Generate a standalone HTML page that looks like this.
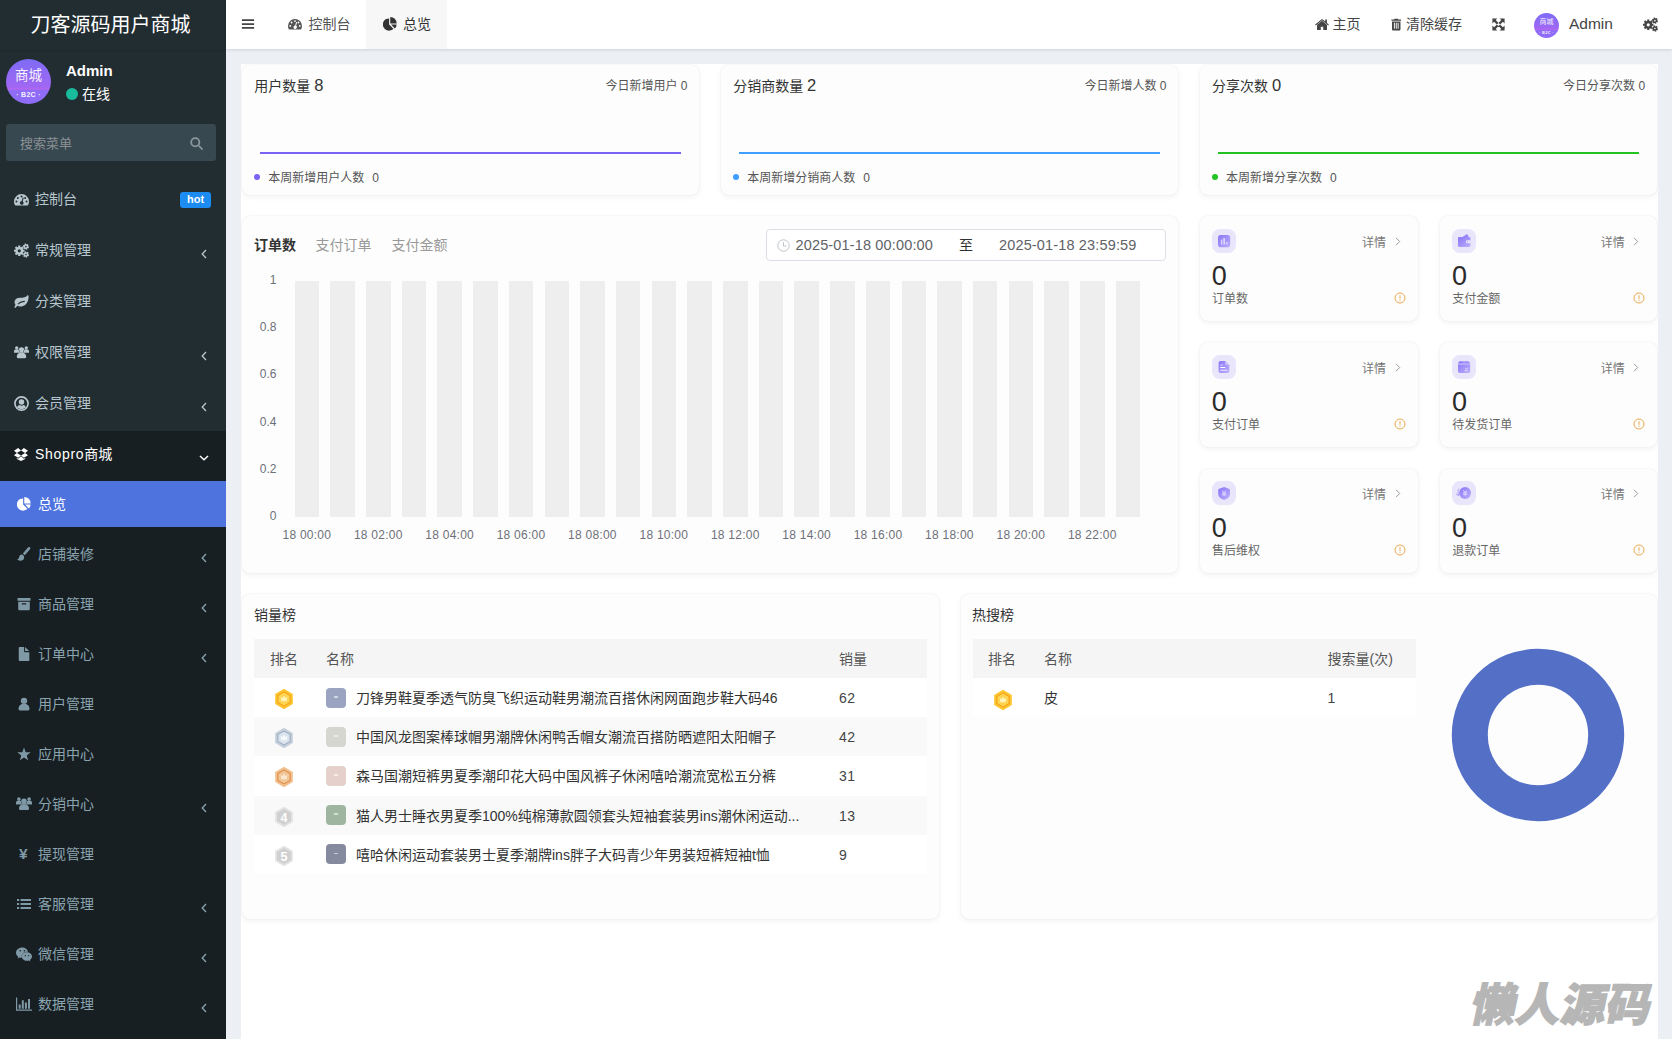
<!DOCTYPE html>
<html lang="zh-CN"><head><meta charset="utf-8"><title>刀客源码用户商城</title>
<style>
*{box-sizing:border-box;margin:0;padding:0}
html,body{width:1672px;height:1039px;overflow:hidden}
body{background:#eceff4;font-family:"Liberation Sans","Noto Sans CJK SC",sans-serif;font-size:14px;color:#333;position:relative}
.abs{position:absolute}
.ic{display:block;position:absolute}
.t{position:absolute;white-space:nowrap;line-height:20px;height:20px}
#side{position:absolute;left:0;top:0;width:226px;height:1039px;background:#222d32}
#logo{position:absolute;left:-2.500px;top:0;width:226px;height:50px;color:#fff;font-size:20px;line-height:51.500px;text-align:center;box-shadow:0 1px 2px rgba(0,0,0,.12)}
#sub{position:absolute;left:0;top:431px;width:226px;height:608px;background:#181f23}
#act{position:absolute;left:0;top:481px;width:226px;height:46px;background:#4e73df}
.m1{color:#b8c7ce}.m2{color:#8aa4af}.w{color:#fff}
#nav{position:absolute;left:226px;top:0;width:1446px;height:49px;background:#fff;box-shadow:0 1px 3px rgba(0,21,41,.12);color:#444}
#panel{position:absolute;left:241px;top:63.600px;width:1417px;height:976px;background:#fff;overflow:hidden}
.card{position:absolute;background:#fdfdfd;border-radius:8px;box-shadow:0 2px 6px rgba(0,0,0,.055),0 0 1.500px rgba(0,0,0,.09)}
.g12{font-size:12px;color:#555}
.dot{position:absolute;width:6px;height:6px;border-radius:50%}
.ax{font-size:12px;color:#6e7079}
.th{position:absolute;background:#f5f5f5;height:39px}
.tr{position:absolute;height:39.3px}
.tr.s{background:#f9f9f9}
.thumb{position:absolute;width:20px;height:20px;border-radius:4px}
.thumb:after{content:"";position:absolute;left:8px;top:8.500px;width:4px;height:1.5px;background:rgba(255,255,255,.55)}
</style></head>
<body>
<svg width="0" height="0" style="position:absolute"><defs><linearGradient id="pg" x1="0" y1="0" x2="1" y2="1"><stop offset="0" stop-color="#8a75f7"/><stop offset="1" stop-color="#bcaffc"/></linearGradient></defs></svg>
<div id="side">
<div id="sub"></div><div id="act"></div>
<div id="logo">刀客源码用户商城</div>
<div class="abs" style="left:6px;top:59px;width:45px;height:45px;border-radius:50%;overflow:hidden;background:linear-gradient(180deg,#7d6cf5 0%,#a067f3 62%,#b665f0 66%,#8f6cf7 70%,#8f6cf7 100%);color:#fff;text-align:center"><div style="position:absolute;left:0;right:0;top:8.6px;font-size:13.5px;line-height:15.5px;opacity:.92">商城</div><div style="position:absolute;left:0;right:0;top:31.5px;font-size:7px;line-height:8px;font-weight:bold;opacity:.9;letter-spacing:.3px">· B2C ·</div></div>
<div class="t w" style="left:66px;top:60.5px;height:20px;line-height:20px;font-weight:bold;font-size:15px">Admin</div>
<div class="abs" style="left:66px;top:88px;width:12px;height:12px;border-radius:50%;background:#18bc9c"></div>
<div class="t w" style="left:82px;top:84.0px;height:20px;line-height:20px;font-size:14px">在线</div>
<div class="abs" style="left:6px;top:124px;width:210px;height:37px;border-radius:3px;background:#374850"></div>
<div class="t " style="left:20px;top:133.6px;height:20px;line-height:20px;color:#8a9094;font-size:13px">搜索菜单</div>
<svg class="ic" width="13" height="13" viewBox="0 0 16 16" fill="#8b979d" fill-rule="evenodd" style="left:190px;top:136.5px"><path d="M0.30 6.50a6.2 6.2 0 1 0 12.4 0a6.2 6.2 0 1 0 -12.4 0zM2.60 6.50a3.9 3.9 0 1 0 7.8 0a3.9 3.9 0 1 0 -7.8 0zM10.300 11.700l1.400-1.400 3.900 3.900c.4 .4 .4 1 0 1.400s-1 .4-1.400 0z"/></svg>
<svg class="ic" width="15" height="15" viewBox="0 0 16 16" fill="#b8c7ce" fill-rule="evenodd" style="left:14px;top:191.5px"><path d="M8 2.2a8 8 0 0 0-8 8c0 1.3 .3 2.6 .9 3.7 .2 .3 .5 .5 .8 .5h12.6c.3 0 .6-.2 .8-.5 .6-1.1 .9-2.4 .9-3.7a8 8 0 0 0-8-8zM1.55 10.20a1.05 1.05 0 1 0 2.1 0a1.05 1.05 0 1 0 -2.1 0zM3.05 6.30a1.05 1.05 0 1 0 2.1 0a1.05 1.05 0 1 0 -2.1 0zM6.95 4.70a1.05 1.05 0 1 0 2.1 0a1.05 1.05 0 1 0 -2.1 0zM10.85 6.30a1.05 1.05 0 1 0 2.1 0a1.05 1.05 0 1 0 -2.1 0zM12.35 10.20a1.05 1.05 0 1 0 2.1 0a1.05 1.05 0 1 0 -2.1 0zM9.3 5.8l-1.1 3.9a2 2 0 1 0 1.1 .3l1.1-3.9z"/></svg>
<div class="t m1" style="left:35px;top:189.0px;height:20px;line-height:20px;">控制台</div>
<svg class="ic" width="15" height="15" viewBox="0 0 16 16" fill="#b8c7ce" fill-rule="evenodd" style="left:14px;top:242.5px"><path d="M11.18 7.14L11.18 9.46L9.75 9.43L9.34 10.43L10.36 11.43L8.73 13.06L7.73 12.04L6.73 12.45L6.76 13.88L4.44 13.88L4.47 12.45L3.47 12.04L2.47 13.06L0.84 11.43L1.86 10.43L1.45 9.43L0.02 9.46L0.02 7.14L1.45 7.17L1.86 6.17L0.84 5.17L2.47 3.54L3.47 4.56L4.47 4.15L4.44 2.72L6.76 2.72L6.73 4.15L7.73 4.56L8.73 3.54L10.36 5.17L9.34 6.17L9.75 7.17zM3.90 8.30a1.7 1.7 0 1 0 3.4 0a1.7 1.7 0 1 0 -3.4 0zM16.10 3.99L15.56 5.74L14.68 5.42L14.07 5.99L14.32 6.89L12.53 7.30L12.37 6.38L11.57 6.13L10.92 6.80L9.68 5.45L10.39 4.85L10.20 4.04L9.30 3.81L9.84 2.06L10.72 2.38L11.33 1.81L11.08 0.91L12.87 0.50L13.03 1.42L13.83 1.67L14.48 1.00L15.72 2.35L15.01 2.95L15.20 3.76zM11.85 3.90a0.85 0.85 0 1 0 1.7 0a0.85 0.85 0 1 0 -1.7 0zM16.10 12.39L15.56 14.14L14.68 13.82L14.07 14.39L14.32 15.29L12.53 15.70L12.37 14.78L11.57 14.53L10.92 15.20L9.68 13.85L10.39 13.25L10.20 12.44L9.30 12.21L9.84 10.46L10.72 10.78L11.33 10.21L11.08 9.31L12.87 8.90L13.03 9.82L13.83 10.07L14.48 9.40L15.72 10.75L15.01 11.35L15.20 12.16zM11.85 12.30a0.85 0.85 0 1 0 1.7 0a0.85 0.85 0 1 0 -1.7 0z"/></svg>
<div class="t m1" style="left:35px;top:240.0px;height:20px;line-height:20px;">常规管理</div>
<svg class="ic" style="left:201px;top:248.8px" width="6" height="10" viewBox="0 0 6 10"><path d="M5 1L1.200 5 5 9" fill="none" stroke="#b8c7ce" stroke-width="1.300"/></svg>
<svg class="ic" width="15" height="15" viewBox="0 0 16 16" fill="#b8c7ce" fill-rule="evenodd" style="left:14px;top:293.5px"><path d="M15.6 2.6c0 6-3.6 10.800-9.1 10.800-1.100 0-2.200-.3-3.100-.8-.5 .7-.9 1.500-1.500 2-.5 .4-1.300 .1-1.400-.5-.1-.6 .6-1.400 1.200-2.300C1 11 .6 10 .6 8.900c0-3.400 2.800-4.900 6.300-4.900 3 0 5.600-.4 7.200-2.400 .5-.6 1.500-.2 1.500 .9zM11.500 7.300c-3 .1-5.600 .9-7.600 3.200l.7 .7c1.900-2 4.200-2.700 6.900-2.800z"/></svg>
<div class="t m1" style="left:35px;top:291.0px;height:20px;line-height:20px;">分类管理</div>
<svg class="ic" width="15" height="15" viewBox="0 0 16 16" fill="#b8c7ce" fill-rule="nonzero" style="left:14px;top:344.5px"><path d="M5.10 5.30a2.9 2.9 0 1 0 5.8 0a2.9 2.9 0 1 0 -5.8 0zM3.00 12.80V12.11a5.00 4.20 0 0 1 10.00 0V12.80a1.20 1.20 0 0 1 -1.20 1.20H4.20a1.20 1.20 0 0 1 -1.20 -1.20zM1.10 3.00a1.798 1.798 0 1 0 3.596 0a1.798 1.798 0 1 0 -3.596 0zM-0.20 7.65V7.22a3.10 2.60 0 0 1 6.20 0V7.65a0.74 0.74 0 0 1 -0.74 0.74H0.54a0.74 0.74 0 0 1 -0.74 -0.74zM11.30 3.00a1.798 1.798 0 1 0 3.596 0a1.798 1.798 0 1 0 -3.596 0zM10.00 7.65V7.22a3.10 2.60 0 0 1 6.20 0V7.65a0.74 0.74 0 0 1 -0.74 0.74H10.74a0.74 0.74 0 0 1 -0.74 -0.74z"/></svg>
<div class="t m1" style="left:35px;top:342.0px;height:20px;line-height:20px;">权限管理</div>
<svg class="ic" style="left:201px;top:350.8px" width="6" height="10" viewBox="0 0 6 10"><path d="M5 1L1.200 5 5 9" fill="none" stroke="#b8c7ce" stroke-width="1.300"/></svg>
<svg class="ic" width="15" height="15" viewBox="0 0 16 16" fill="#b8c7ce" fill-rule="evenodd" style="left:14px;top:395.5px"><path d="M0.10 8.00a7.9 7.9 0 1 0 15.8 0a7.9 7.9 0 1 0 -15.8 0zM1.90 8.00a6.1 6.1 0 1 0 12.2 0a6.1 6.1 0 1 0 -12.2 0zM5.10 6.30a2.9 2.9 0 1 0 5.8 0a2.9 2.9 0 1 0 -5.8 0zM3.2 12.300c.5-1.700 1.600-2.600 2.700-2.800 .6 .5 1.300 .8 2.100 .8s1.500-.3 2.100-.8c1.100 .2 2.200 1.100 2.700 2.800-1.200 1.300-2.900 2.100-4.800 2.100s-3.600-.8-4.800-2.100z"/></svg>
<div class="t m1" style="left:35px;top:393.0px;height:20px;line-height:20px;">会员管理</div>
<svg class="ic" style="left:201px;top:401.8px" width="6" height="10" viewBox="0 0 6 10"><path d="M5 1L1.200 5 5 9" fill="none" stroke="#b8c7ce" stroke-width="1.300"/></svg>
<div class="abs" style="left:180px;top:192px;width:31px;height:16px;border-radius:3px;background:#1c8bf2;color:#fff;font-size:11px;font-weight:bold;line-height:15px;text-align:center">hot</div>
<svg class="ic" width="14" height="14" viewBox="0 0 16 16" fill="#fff" fill-rule="evenodd" style="left:14px;top:446.7px"><path d="M4.7 1.200L0 4.200l3.300 2.600L8 3.900zM11.300 1.200L16 4.200l-3.300 2.600L8 3.900zM0 9.400l4.700 3 3.300-2.700-4.700-2.900zM16 9.400l-4.700 3L8 9.700l4.700-2.900zM8 10.700l-3.300 2.700-1.500-.9v1.100L8 16l4.800-2.400v-1.100l-1.500 .9z"/></svg>
<div class="t w" style="left:35px;top:444.0px;height:20px;line-height:20px;"><span style="letter-spacing:.7px">Shopro</span>商城</div>
<svg class="ic" style="left:199px;top:454.5px" width="10" height="6" viewBox="0 0 10 6"><path d="M1 1L5 4.800 9 1" fill="none" stroke="#fff" stroke-width="1.5"/></svg>
<svg class="ic" width="14" height="14" viewBox="0 0 16 16" fill="#fff" fill-rule="evenodd" style="left:17px;top:496.8px"><path d="M7 1.600v6.900l4.900 4.900A7 7 0 1 1 7 1.600zM8.300 0a7.300 7.300 0 0 1 7.300 7.300H8.300zM9.200 8.600h6.400a7 7 0 0 1-2 4.500z"/></svg>
<div class="t w" style="left:38px;top:493.6px;height:20px;line-height:20px;">总览</div>
<svg class="ic" width="14" height="14" viewBox="0 0 16 16" fill="#7f9aa6" fill-rule="evenodd" style="left:16.5px;top:546.7px"><path d="M14.700 .3c-.6-.5-1.500-.4-2.200 .3L6.700 7.400l2.200 2 5.900-6.800c.7-.8 .6-1.700-.1-2.300zM5.700 8.500c-1.500 0-2.800 1-3.100 2.500-.3 1.500-1 2.500-2.400 3 .9 1.200 2.500 1.800 4.300 1.600 2.500-.3 4-2.200 3.600-4.400-.3-1.500-1.100-2.600-2.400-2.700z"/></svg>
<div class="t m2" style="left:38px;top:544.0px;height:20px;line-height:20px;">店铺装修</div>
<svg class="ic" style="left:201px;top:552.8px" width="6" height="10" viewBox="0 0 6 10"><path d="M5 1L1.200 5 5 9" fill="none" stroke="#8aa4af" stroke-width="1.300"/></svg>
<svg class="ic" width="14" height="14" viewBox="0 0 16 16" fill="#7f9aa6" fill-rule="evenodd" style="left:16.5px;top:596.7px"><path d="M.6 1h14.800v3.400H.6zM1.400 5.400h13.200v8.700c0 .5-.4 .9-.9 .9H2.300c-.5 0-.9-.4-.9-.9zM6 7.200c-.4 0-.7 .3-.7 .7s.3 .7 .7 .7h4c.4 0 .7-.3 .7-.7s-.3-.7-.7-.7z"/></svg>
<div class="t m2" style="left:38px;top:594.0px;height:20px;line-height:20px;">商品管理</div>
<svg class="ic" style="left:201px;top:602.8px" width="6" height="10" viewBox="0 0 6 10"><path d="M5 1L1.200 5 5 9" fill="none" stroke="#8aa4af" stroke-width="1.300"/></svg>
<svg class="ic" width="14" height="14" viewBox="0 0 16 16" fill="#7f9aa6" fill-rule="evenodd" style="left:16.5px;top:646.7px"><path d="M9.200 0v4.700h4.700zM8.100 0H2.900c-.5 0-.9 .4-.9 .9v14.200c0 .5 .4 .9 .9 .9h10.300c.5 0 .9-.4 .9-.9V5.900H9c-.5 0-.9-.4-.9-.9z"/></svg>
<div class="t m2" style="left:38px;top:644.0px;height:20px;line-height:20px;">订单中心</div>
<svg class="ic" style="left:201px;top:652.8px" width="6" height="10" viewBox="0 0 6 10"><path d="M5 1L1.200 5 5 9" fill="none" stroke="#8aa4af" stroke-width="1.300"/></svg>
<svg class="ic" width="14" height="14" viewBox="0 0 16 16" fill="#7f9aa6" fill-rule="nonzero" style="left:16.5px;top:696.7px"><path d="M4.38 4.42a3.625 3.625 0 1 0 7.25 0a3.625 3.625 0 1 0 -7.25 0zM1.75 13.80V12.94a6.25 5.25 0 0 1 12.50 0V13.80a1.50 1.50 0 0 1 -1.50 1.50H3.25a1.50 1.50 0 0 1 -1.50 -1.50z"/></svg>
<div class="t m2" style="left:38px;top:694.0px;height:20px;line-height:20px;">用户管理</div>
<svg class="ic" width="14" height="14" viewBox="0 0 16 16" fill="#7f9aa6" fill-rule="evenodd" style="left:16.5px;top:746.7px"><path d="M8.00 0.60L9.94 5.93L15.61 6.13L11.14 9.62L12.70 15.07L8.00 11.90L3.30 15.07L4.86 9.62L0.39 6.13L6.06 5.93z"/></svg>
<div class="t m2" style="left:38px;top:744.0px;height:20px;line-height:20px;">应用中心</div>
<svg class="ic" width="16" height="16" viewBox="0 0 16 16" fill="#7f9aa6" fill-rule="nonzero" style="left:15.7px;top:795.7px"><path d="M5.10 5.30a2.9 2.9 0 1 0 5.8 0a2.9 2.9 0 1 0 -5.8 0zM3.00 12.80V12.11a5.00 4.20 0 0 1 10.00 0V12.80a1.20 1.20 0 0 1 -1.20 1.20H4.20a1.20 1.20 0 0 1 -1.20 -1.20zM1.10 3.00a1.798 1.798 0 1 0 3.596 0a1.798 1.798 0 1 0 -3.596 0zM-0.20 7.65V7.22a3.10 2.60 0 0 1 6.20 0V7.65a0.74 0.74 0 0 1 -0.74 0.74H0.54a0.74 0.74 0 0 1 -0.74 -0.74zM11.30 3.00a1.798 1.798 0 1 0 3.596 0a1.798 1.798 0 1 0 -3.596 0zM10.00 7.65V7.22a3.10 2.60 0 0 1 6.20 0V7.65a0.74 0.74 0 0 1 -0.74 0.74H10.74a0.74 0.74 0 0 1 -0.74 -0.74z"/></svg>
<div class="t m2" style="left:38px;top:794.0px;height:20px;line-height:20px;">分销中心</div>
<svg class="ic" style="left:201px;top:802.8px" width="6" height="10" viewBox="0 0 6 10"><path d="M5 1L1.200 5 5 9" fill="none" stroke="#8aa4af" stroke-width="1.300"/></svg>
<div class="t m2" style="left:19px;top:844.0px;height:20px;line-height:20px;font-weight:bold;font-size:15.500px;color:#7f9aa6">¥</div>
<div class="t m2" style="left:38px;top:844.0px;height:20px;line-height:20px;">提现管理</div>
<svg class="ic" width="14" height="14" viewBox="0 0 16 16" fill="#7f9aa6" fill-rule="evenodd" style="left:16.5px;top:896.7px"><path d="M0 2.400h2.400v2.300H0zM0 6.900h2.400v2.300H0zM0 11.400h2.400v2.300H0zM4 2.400h12v2.300H4zM4 6.900h12v2.300H4zM4 11.400h12v2.300H4z"/></svg>
<div class="t m2" style="left:38px;top:894.0px;height:20px;line-height:20px;">客服管理</div>
<svg class="ic" style="left:201px;top:902.8px" width="6" height="10" viewBox="0 0 6 10"><path d="M5 1L1.200 5 5 9" fill="none" stroke="#8aa4af" stroke-width="1.300"/></svg>
<svg class="ic" width="16" height="16" viewBox="0 0 16 16" fill="#7f9aa6" fill-rule="evenodd" style="left:15.7px;top:945.7px"><path d="M6.300 1.500C2.800 1.500 0 3.800 0 6.700c0 1.600 .9 3 2.300 4l-.6 1.800 2.100-1.100c.7 .2 1.300 .3 2 .4-.1-.4-.2-.8-.2-1.200 0-2.700 2.600-4.900 5.800-4.900h.6C11.500 3.300 9.100 1.500 6.300 1.500zM3.40 4.80a0.8 0.8 0 1 0 1.6 0a0.8 0.8 0 1 0 -1.6 0zM7.60 4.80a0.8 0.8 0 1 0 1.6 0a0.8 0.8 0 1 0 -1.6 0zM16 10.500c0-2.400-2.400-4.300-5.100-4.300-2.900 0-5.100 1.900-5.100 4.300s2.200 4.300 5.100 4.300c.6 0 1.200-.1 1.800-.3l1.700 .9-.5-1.500c1.300-.9 2.100-2.100 2.100-3.400zM8.65 9.70a0.65 0.65 0 1 0 1.3 0a0.65 0.65 0 1 0 -1.3 0zM11.95 9.70a0.65 0.65 0 1 0 1.3 0a0.65 0.65 0 1 0 -1.3 0z"/></svg>
<div class="t m2" style="left:38px;top:944.0px;height:20px;line-height:20px;">微信管理</div>
<svg class="ic" style="left:201px;top:952.8px" width="6" height="10" viewBox="0 0 6 10"><path d="M5 1L1.200 5 5 9" fill="none" stroke="#8aa4af" stroke-width="1.300"/></svg>
<svg class="ic" width="16" height="16" viewBox="0 0 16 16" fill="#7f9aa6" fill-rule="evenodd" style="left:15.7px;top:995.7px"><path d="M0 1.500h1.200v12H16v1.200H0zM2.700 8.600h2v4.200h-2zM5.800 4.300h2v8.500h-2zM8.900 6.400h2v6.400h-2zM12 3h2v9.800h-2z"/></svg>
<div class="t m2" style="left:38px;top:994.0px;height:20px;line-height:20px;">数据管理</div>
<svg class="ic" style="left:201px;top:1002.8px" width="6" height="10" viewBox="0 0 6 10"><path d="M5 1L1.200 5 5 9" fill="none" stroke="#8aa4af" stroke-width="1.300"/></svg>
</div>
<div id="nav">
<div class="abs" style="left:140px;top:0;width:81px;height:49px;background:#f7f7f7"></div>
</div>
<svg class="ic" width="14" height="14" viewBox="0 0 16 16" fill="#444" fill-rule="evenodd" style="left:241px;top:17px"><path d="M1 2.6h14v2.1H1zM1 7h14v2.1H1zM1 11.4h14v2.1H1z"/></svg>
<svg class="ic" width="14" height="14" viewBox="0 0 16 16" fill="#555" fill-rule="evenodd" style="left:288px;top:17px"><path d="M8 2.2a8 8 0 0 0-8 8c0 1.3 .3 2.6 .9 3.7 .2 .3 .5 .5 .8 .5h12.6c.3 0 .6-.2 .8-.5 .6-1.1 .9-2.4 .9-3.7a8 8 0 0 0-8-8zM1.55 10.20a1.05 1.05 0 1 0 2.1 0a1.05 1.05 0 1 0 -2.1 0zM3.05 6.30a1.05 1.05 0 1 0 2.1 0a1.05 1.05 0 1 0 -2.1 0zM6.95 4.70a1.05 1.05 0 1 0 2.1 0a1.05 1.05 0 1 0 -2.1 0zM10.85 6.30a1.05 1.05 0 1 0 2.1 0a1.05 1.05 0 1 0 -2.1 0zM12.35 10.20a1.05 1.05 0 1 0 2.1 0a1.05 1.05 0 1 0 -2.1 0zM9.3 5.8l-1.1 3.9a2 2 0 1 0 1.1 .3l1.1-3.9z"/></svg>
<div class="t " style="left:308.5px;top:13.7px;height:20px;line-height:20px;color:#555">控制台</div>
<svg class="ic" width="14" height="14" viewBox="0 0 16 16" fill="#333" fill-rule="evenodd" style="left:383px;top:17px"><path d="M7 1.600v6.900l4.900 4.900A7 7 0 1 1 7 1.600zM8.300 0a7.300 7.300 0 0 1 7.300 7.300H8.300zM9.200 8.600h6.400a7 7 0 0 1-2 4.500z"/></svg>
<div class="t " style="left:403px;top:13.7px;height:20px;line-height:20px;color:#333">总览</div>
<svg class="ic" width="14" height="14" viewBox="0 0 16 16" fill="#444" fill-rule="evenodd" style="left:1315px;top:17.5px"><path d="M8 3.200L2.300 7.900v5.200c0 .4 .3 .6 .6 .6h3.700V9.900h2.800v3.800h3.700c.3 0 .6-.2 .6-.6V7.900zM15.800 7.500L13.600 5.700V1.800h-1.900v2.300L8 1 .2 7.500l.8 1L8 2.700l7 5.800z"/></svg>
<div class="t " style="left:1332.5px;top:13.7px;height:20px;line-height:20px;color:#444">主页</div>
<svg class="ic" width="12.5" height="12.5" viewBox="0 0 16 16" fill="#444" fill-rule="evenodd" style="left:1389.5px;top:18px"><path d="M5.900 .8L5.300 2H1.800v1.500h12.400V2h-3.500L10.100 .8zM2.600 4.400h10.800v10c0 .9-.7 1.600-1.600 1.600H4.200c-.9 0-1.600-.7-1.600-1.600zM5 6.200v7.600h1.200V6.200zM7.400 6.200v7.600h1.200V6.200zM9.800 6.200v7.600H11V6.200z"/></svg>
<div class="t " style="left:1406px;top:13.7px;height:20px;line-height:20px;color:#444">清除缓存</div>
<svg class="ic" width="13" height="13" viewBox="0 0 16 16" fill="#444" fill-rule="evenodd" style="left:1491.5px;top:18px"><path d="M.5 .5h6.200L4.600 2.600 6.800 4.800 4.800 6.800 2.600 4.600 .5 6.700zM15.500 .5v6.200L13.400 4.600 11.200 6.800 9.200 4.800 11.400 2.600 9.300 .5zM.5 15.500V9.300L2.600 11.400 4.800 9.200 6.800 11.200 4.600 13.400 6.700 15.500zM15.500 15.500H9.300L11.400 13.400 9.200 11.200 11.200 9.200 13.400 11.400 15.500 9.300zM4.800 6.800L6.800 4.800 11.200 9.200 9.200 11.200zM9.200 4.800L11.200 6.800 6.800 11.200 4.800 9.200z"/></svg>
<div class="abs" style="left:1534px;top:12.7px;width:25px;height:25px;border-radius:50%;overflow:hidden;background:linear-gradient(180deg,#7d6cf5 0%,#a067f3 62%,#b665f0 66%,#8f6cf7 70%,#8f6cf7 100%);color:#fff;text-align:center"><div style="position:absolute;left:0;right:0;top:4.8px;font-size:7px;line-height:9px;opacity:.92">商城</div><div style="position:absolute;left:0;right:0;top:17.5px;font-size:4px;line-height:5px;font-weight:bold;opacity:.9;letter-spacing:.3px">· B2C ·</div></div>
<div class="t " style="left:1569px;top:13.7px;height:20px;line-height:20px;color:#444;font-size:15.500px">Admin</div>
<svg class="ic" width="15" height="15" viewBox="0 0 16 16" fill="#444" fill-rule="evenodd" style="left:1643px;top:17px"><path d="M11.18 7.14L11.18 9.46L9.75 9.43L9.34 10.43L10.36 11.43L8.73 13.06L7.73 12.04L6.73 12.45L6.76 13.88L4.44 13.88L4.47 12.45L3.47 12.04L2.47 13.06L0.84 11.43L1.86 10.43L1.45 9.43L0.02 9.46L0.02 7.14L1.45 7.17L1.86 6.17L0.84 5.17L2.47 3.54L3.47 4.56L4.47 4.15L4.44 2.72L6.76 2.72L6.73 4.15L7.73 4.56L8.73 3.54L10.36 5.17L9.34 6.17L9.75 7.17zM3.90 8.30a1.7 1.7 0 1 0 3.4 0a1.7 1.7 0 1 0 -3.4 0zM16.10 3.99L15.56 5.74L14.68 5.42L14.07 5.99L14.32 6.89L12.53 7.30L12.37 6.38L11.57 6.13L10.92 6.80L9.68 5.45L10.39 4.85L10.20 4.04L9.30 3.81L9.84 2.06L10.72 2.38L11.33 1.81L11.08 0.91L12.87 0.50L13.03 1.42L13.83 1.67L14.48 1.00L15.72 2.35L15.01 2.95L15.20 3.76zM11.85 3.90a0.85 0.85 0 1 0 1.7 0a0.85 0.85 0 1 0 -1.7 0zM16.10 12.39L15.56 14.14L14.68 13.82L14.07 14.39L14.32 15.29L12.53 15.70L12.37 14.78L11.57 14.53L10.92 15.20L9.68 13.85L10.39 13.25L10.20 12.44L9.30 12.21L9.84 10.46L10.72 10.78L11.33 10.21L11.08 9.31L12.87 8.90L13.03 9.82L13.83 10.07L14.48 9.40L15.72 10.75L15.01 11.35L15.20 12.16zM11.85 12.30a0.85 0.85 0 1 0 1.7 0a0.85 0.85 0 1 0 -1.7 0z"/></svg>
<div id="panel"><div class="abs" style="left:-241px;top:-63.600px;width:1672px;height:1039px">
<div class="card" style="left:242px;top:64.7px;width:457.29999999999995px;height:130.2px"></div>
<div class="t " style="left:254.3px;top:74.8px;height:20px;line-height:20px;color:#333">用户数量 <span style="font-size:16.500px">8</span></div>
<div class="t g12" style="right:984.6px;top:75.9px;height:20px;line-height:20px;">今日新增用户 0</div>
<div class="abs" style="left:260.3px;top:151.500px;width:420.69999999999993px;height:2px;background:#7c62f4"></div>
<div class="dot" style="left:254.3px;top:174px;background:#7c62f4"></div>
<div class="t g12" style="left:268.3px;top:167.5px;height:20px;line-height:20px;">本周新增用户人数<span style="margin-left:8px">0</span></div>
<div class="card" style="left:720.9px;top:64.7px;width:457.4px;height:130.2px"></div>
<div class="t " style="left:733.1999999999999px;top:74.8px;height:20px;line-height:20px;color:#333">分销商数量 <span style="font-size:16.500px">2</span></div>
<div class="t g12" style="right:505.60000000000014px;top:75.9px;height:20px;line-height:20px;">今日新增人数 0</div>
<div class="abs" style="left:739.1999999999999px;top:151.500px;width:420.79999999999995px;height:2px;background:#409eff"></div>
<div class="dot" style="left:733.1999999999999px;top:174px;background:#409eff"></div>
<div class="t g12" style="left:747.1999999999999px;top:167.5px;height:20px;line-height:20px;">本周新增分销商人数<span style="margin-left:8px">0</span></div>
<div class="card" style="left:1199.7px;top:64.7px;width:457.29999999999995px;height:130.2px"></div>
<div class="t " style="left:1212.0px;top:74.8px;height:20px;line-height:20px;color:#333">分享次数 <span style="font-size:16.500px">0</span></div>
<div class="t g12" style="right:26.90000000000009px;top:75.9px;height:20px;line-height:20px;">今日分享次数 0</div>
<div class="abs" style="left:1218.0px;top:151.500px;width:420.69999999999993px;height:2px;background:#22c322"></div>
<div class="dot" style="left:1212.0px;top:174px;background:#22c322"></div>
<div class="t g12" style="left:1226.0px;top:167.5px;height:20px;line-height:20px;">本周新增分享次数<span style="margin-left:8px">0</span></div>
<div class="card" style="left:241.7px;top:216.2px;width:936.5999999999999px;height:356.8px"></div>
<div class="t " style="left:254px;top:235.0px;height:20px;line-height:20px;font-weight:bold;color:#333">订单数</div>
<div class="t " style="left:315.5px;top:235.0px;height:20px;line-height:20px;color:#999">支付订单</div>
<div class="t " style="left:391.5px;top:235.0px;height:20px;line-height:20px;color:#999">支付金额</div>
<div class="abs" style="left:766px;top:229px;width:400px;height:32px;border:1px solid #dcdfe6;border-radius:4px;background:#fff"></div>
<svg class="ic" style="left:776.500px;top:238.500px" width="13" height="13" viewBox="0 0 13 13"><circle cx="6.5" cy="6.5" r="5.700" fill="none" stroke="#c0c4cc" stroke-width="1"/><path d="M6.500 3.200V7H9.500" fill="none" stroke="#c0c4cc" stroke-width="1"/></svg>
<div class="t " style="left:795.5px;top:235.0px;height:20px;line-height:20px;color:#606266;font-size:14.500px;letter-spacing:.15px">2025-01-18 00:00:00</div>
<div class="t " style="left:959px;top:235.0px;height:20px;line-height:20px;color:#303133">至</div>
<div class="t " style="left:999px;top:235.0px;height:20px;line-height:20px;color:#606266;font-size:14.500px;letter-spacing:.15px">2025-01-18 23:59:59</div>
<div class="abs" style="left:294.60px;top:280.5px;width:24.5px;height:236.0px;background:#eeeeee"></div>
<div class="abs" style="left:330.30px;top:280.5px;width:24.5px;height:236.0px;background:#eeeeee"></div>
<div class="abs" style="left:366.00px;top:280.5px;width:24.5px;height:236.0px;background:#eeeeee"></div>
<div class="abs" style="left:401.70px;top:280.5px;width:24.5px;height:236.0px;background:#eeeeee"></div>
<div class="abs" style="left:437.40px;top:280.5px;width:24.5px;height:236.0px;background:#eeeeee"></div>
<div class="abs" style="left:473.10px;top:280.5px;width:24.5px;height:236.0px;background:#eeeeee"></div>
<div class="abs" style="left:508.80px;top:280.5px;width:24.5px;height:236.0px;background:#eeeeee"></div>
<div class="abs" style="left:544.50px;top:280.5px;width:24.5px;height:236.0px;background:#eeeeee"></div>
<div class="abs" style="left:580.20px;top:280.5px;width:24.5px;height:236.0px;background:#eeeeee"></div>
<div class="abs" style="left:615.90px;top:280.5px;width:24.5px;height:236.0px;background:#eeeeee"></div>
<div class="abs" style="left:651.60px;top:280.5px;width:24.5px;height:236.0px;background:#eeeeee"></div>
<div class="abs" style="left:687.30px;top:280.5px;width:24.5px;height:236.0px;background:#eeeeee"></div>
<div class="abs" style="left:723.00px;top:280.5px;width:24.5px;height:236.0px;background:#eeeeee"></div>
<div class="abs" style="left:758.70px;top:280.5px;width:24.5px;height:236.0px;background:#eeeeee"></div>
<div class="abs" style="left:794.40px;top:280.5px;width:24.5px;height:236.0px;background:#eeeeee"></div>
<div class="abs" style="left:830.10px;top:280.5px;width:24.5px;height:236.0px;background:#eeeeee"></div>
<div class="abs" style="left:865.80px;top:280.5px;width:24.5px;height:236.0px;background:#eeeeee"></div>
<div class="abs" style="left:901.50px;top:280.5px;width:24.5px;height:236.0px;background:#eeeeee"></div>
<div class="abs" style="left:937.20px;top:280.5px;width:24.5px;height:236.0px;background:#eeeeee"></div>
<div class="abs" style="left:972.90px;top:280.5px;width:24.5px;height:236.0px;background:#eeeeee"></div>
<div class="abs" style="left:1008.60px;top:280.5px;width:24.5px;height:236.0px;background:#eeeeee"></div>
<div class="abs" style="left:1044.30px;top:280.5px;width:24.5px;height:236.0px;background:#eeeeee"></div>
<div class="abs" style="left:1080.00px;top:280.5px;width:24.5px;height:236.0px;background:#eeeeee"></div>
<div class="abs" style="left:1115.70px;top:280.5px;width:24.5px;height:236.0px;background:#eeeeee"></div>
<div class="t ax" style="right:1395.5px;top:269.5px;height:20px;line-height:20px;">1</div>
<div class="t ax" style="right:1395.5px;top:316.9px;height:20px;line-height:20px;">0.8</div>
<div class="t ax" style="right:1395.5px;top:364.4px;height:20px;line-height:20px;">0.6</div>
<div class="t ax" style="right:1395.5px;top:411.7px;height:20px;line-height:20px;">0.4</div>
<div class="t ax" style="right:1395.5px;top:459.0px;height:20px;line-height:20px;">0.2</div>
<div class="t ax" style="right:1395.5px;top:505.6px;height:20px;line-height:20px;">0</div>
<div class="t ax" style="left:266.85px;width:80px;text-align:center;top:525px;letter-spacing:.25px">18 00:00</div>
<div class="t ax" style="left:338.25px;width:80px;text-align:center;top:525px;letter-spacing:.25px">18 02:00</div>
<div class="t ax" style="left:409.65px;width:80px;text-align:center;top:525px;letter-spacing:.25px">18 04:00</div>
<div class="t ax" style="left:481.05px;width:80px;text-align:center;top:525px;letter-spacing:.25px">18 06:00</div>
<div class="t ax" style="left:552.45px;width:80px;text-align:center;top:525px;letter-spacing:.25px">18 08:00</div>
<div class="t ax" style="left:623.85px;width:80px;text-align:center;top:525px;letter-spacing:.25px">18 10:00</div>
<div class="t ax" style="left:695.25px;width:80px;text-align:center;top:525px;letter-spacing:.25px">18 12:00</div>
<div class="t ax" style="left:766.65px;width:80px;text-align:center;top:525px;letter-spacing:.25px">18 14:00</div>
<div class="t ax" style="left:838.05px;width:80px;text-align:center;top:525px;letter-spacing:.25px">18 16:00</div>
<div class="t ax" style="left:909.45px;width:80px;text-align:center;top:525px;letter-spacing:.25px">18 18:00</div>
<div class="t ax" style="left:980.85px;width:80px;text-align:center;top:525px;letter-spacing:.25px">18 20:00</div>
<div class="t ax" style="left:1052.25px;width:80px;text-align:center;top:525px;letter-spacing:.25px">18 22:00</div>
<div class="card" style="left:1199.7px;top:216.3px;width:218.5999999999999px;height:104.69999999999999px"></div>
<div class="abs" style="left:1211.70px;top:228.60px;width:24.300px;height:24.300px;border-radius:8px;background:#e9e5fb"></div>
<svg class="ic" style="left:1217.70px;top:234.70px;overflow:visible" width="12.500" height="12.500" viewBox="0 0 12.500 12.500"><rect x="0" y="0" width="12.200" height="12.200" rx="2.800" fill="url(#pg)"/><g fill="#ddd6fd"><rect x="2.900" y="4.400" width="1.400" height="5.200" rx=".6"/><rect x="5.300" y="3" width="1.700" height="6.600" rx=".6"/><rect x="8.100" y="7" width="1.400" height="2.600" rx=".6"/></g></svg>
<div class="t " style="right:286.0px;top:232.70000000000002px;height:20px;line-height:20px;font-size:12px;color:#777">详情</div>
<svg class="ic" style="left:1394.7px;top:237.10000000000002px" width="6" height="9" viewBox="0 0 6 9"><path d="M1 .8L4.700 4.500 1 8.200" fill="none" stroke="#999" stroke-width="1"/></svg>
<div class="t " style="left:1211.7px;top:260.8px;height:30px;line-height:30px;font-size:27px;color:#2b2b2b">0</div>
<div class="t " style="left:1212.0px;top:288.8px;height:20px;line-height:20px;font-size:12px;color:#666">订单数</div>
<svg class="ic" style="left:1394.05px;top:291.60px" width="12" height="12" viewBox="0 0 12 12"><circle cx="6" cy="6" r="5" fill="none" stroke="#eaa94e" stroke-width="1"/><rect x="5.500" y="3.200" width="1" height="3.600" fill="#eaa94e"/><rect x="5.500" y="7.700" width="1" height="1.100" fill="#eaa94e"/></svg>
<div class="card" style="left:1440.0px;top:216.3px;width:217.0px;height:104.69999999999999px"></div>
<div class="abs" style="left:1452.00px;top:228.60px;width:24.300px;height:24.300px;border-radius:8px;background:#e9e5fb"></div>
<svg class="ic" style="left:1458.00px;top:234.70px;overflow:visible" width="12.500" height="12.500" viewBox="0 0 12.500 12.500"><path d="M4 2.200L8.300 -.5c.3-.2 .7-.2 1 0l.6 .5c.3 .2 .4 .5 .4 .8v1.400z" fill="#9886f8"/><path d="M1.200 2.100h10c.7 0 1.200 .5 1.200 1.200v7.400c0 .7-.5 1.200-1.200 1.200h-10c-.7 0-1.200-.5-1.200-1.200V3.300c0-.7 .5-1.200 1.200-1.200z" fill="url(#pg)"/><path d="M9.400 5.200h3.200v3.100H9.400c-.9 0-1.600-.7-1.600-1.550s.7-1.550 1.600-1.550z" fill="#e9e5fb"/><circle cx="9.500" cy="6.750" r=".55" fill="#9c8bf9"/></svg>
<div class="t " style="right:47.299999999999955px;top:232.70000000000002px;height:20px;line-height:20px;font-size:12px;color:#777">详情</div>
<svg class="ic" style="left:1633.4px;top:237.10000000000002px" width="6" height="9" viewBox="0 0 6 9"><path d="M1 .8L4.700 4.500 1 8.200" fill="none" stroke="#999" stroke-width="1"/></svg>
<div class="t " style="left:1452.0px;top:260.8px;height:30px;line-height:30px;font-size:27px;color:#2b2b2b">0</div>
<div class="t " style="left:1452.3px;top:288.8px;height:20px;line-height:20px;font-size:12px;color:#666">支付金额</div>
<svg class="ic" style="left:1632.75px;top:291.60px" width="12" height="12" viewBox="0 0 12 12"><circle cx="6" cy="6" r="5" fill="none" stroke="#eaa94e" stroke-width="1"/><rect x="5.500" y="3.200" width="1" height="3.600" fill="#eaa94e"/><rect x="5.500" y="7.700" width="1" height="1.100" fill="#eaa94e"/></svg>
<div class="card" style="left:1199.7px;top:342.4px;width:218.5999999999999px;height:104.69999999999999px"></div>
<div class="abs" style="left:1211.70px;top:354.70px;width:24.300px;height:24.300px;border-radius:8px;background:#e9e5fb"></div>
<svg class="ic" style="left:1217.70px;top:360.80px;overflow:visible" width="12.500" height="12.500" viewBox="0 0 12.500 12.500"><path d="M2.600 0h4.500l4.200 4.200v5.900c0 1.100-.9 2-2 2H2.600c-1.100 0-2-.9-2-2V2c0-1.100 .9-2 2-2z" fill="url(#pg)"/><path d="M7.100 0v2.700c0 .9 .7 1.600 1.600 1.600h2.600z" fill="#c9bffc"/><g fill="#ddd6fd"><rect x="2.100" y="3.500" width="2.900" height="1.100" rx=".5"/><rect x="2.100" y="8.800" width="7.400" height="1.200" rx=".5"/></g><rect x="2.100" y="6.100" width="5.200" height="1" rx=".5" fill="#fff"/></svg>
<div class="t " style="right:286.0px;top:358.79999999999995px;height:20px;line-height:20px;font-size:12px;color:#777">详情</div>
<svg class="ic" style="left:1394.7px;top:363.2px" width="6" height="9" viewBox="0 0 6 9"><path d="M1 .8L4.700 4.500 1 8.200" fill="none" stroke="#999" stroke-width="1"/></svg>
<div class="t " style="left:1211.7px;top:386.9px;height:30px;line-height:30px;font-size:27px;color:#2b2b2b">0</div>
<div class="t " style="left:1212.0px;top:414.9px;height:20px;line-height:20px;font-size:12px;color:#666">支付订单</div>
<svg class="ic" style="left:1394.05px;top:417.70px" width="12" height="12" viewBox="0 0 12 12"><circle cx="6" cy="6" r="5" fill="none" stroke="#eaa94e" stroke-width="1"/><rect x="5.500" y="3.200" width="1" height="3.600" fill="#eaa94e"/><rect x="5.500" y="7.700" width="1" height="1.100" fill="#eaa94e"/></svg>
<div class="card" style="left:1440.0px;top:342.4px;width:217.0px;height:104.69999999999999px"></div>
<div class="abs" style="left:1452.00px;top:354.70px;width:24.300px;height:24.300px;border-radius:8px;background:#e9e5fb"></div>
<svg class="ic" style="left:1458.00px;top:360.80px;overflow:visible" width="12.500" height="12.500" viewBox="0 0 12.500 12.500"><path d="M2.200 .2h7.700c.9 0 1.700 .6 1.900 1.500l.4 2.300v6.100c0 1-.8 1.800-1.800 1.800H1.800c-1 0-1.800-.8-1.800-1.800V4l.4-2.300C.5 .8 1.300 .2 2.200 .2z" fill="url(#pg)"/><path d="M.3 2.200h11.500l.4 1.800H0z" fill="#b9adfb"/><rect x="5.300" y=".2" width="1.500" height="2" fill="#b9adfb"/><g fill="#ddd6fd"><rect x="7.100" y="7.300" width="2.800" height="1" rx=".5"/><rect x="6.300" y="9.200" width="3.600" height="1" rx=".5"/></g></svg>
<div class="t " style="right:47.299999999999955px;top:358.79999999999995px;height:20px;line-height:20px;font-size:12px;color:#777">详情</div>
<svg class="ic" style="left:1633.4px;top:363.2px" width="6" height="9" viewBox="0 0 6 9"><path d="M1 .8L4.700 4.500 1 8.200" fill="none" stroke="#999" stroke-width="1"/></svg>
<div class="t " style="left:1452.0px;top:386.9px;height:30px;line-height:30px;font-size:27px;color:#2b2b2b">0</div>
<div class="t " style="left:1452.3px;top:414.9px;height:20px;line-height:20px;font-size:12px;color:#666">待发货订单</div>
<svg class="ic" style="left:1632.75px;top:417.70px" width="12" height="12" viewBox="0 0 12 12"><circle cx="6" cy="6" r="5" fill="none" stroke="#eaa94e" stroke-width="1"/><rect x="5.500" y="3.200" width="1" height="3.600" fill="#eaa94e"/><rect x="5.500" y="7.700" width="1" height="1.100" fill="#eaa94e"/></svg>
<div class="card" style="left:1199.7px;top:468.5px;width:218.5999999999999px;height:104.70000000000005px"></div>
<div class="abs" style="left:1211.70px;top:480.80px;width:24.300px;height:24.300px;border-radius:8px;background:#e9e5fb"></div>
<svg class="ic" style="left:1217.70px;top:486.90px;overflow:visible" width="12.500" height="12.500" viewBox="0 0 12.500 12.500"><path d="M6.100 0l4.900 1.700c.6 .2 1 .8 1 1.400v3.700c0 3.200-3 5.300-5.900 6.300C3.200 12.100 .2 10 .2 6.800V3.100c0-.6 .4-1.200 1-1.400z" fill="url(#pg)"/><path d="M4.400 4l1.700 1.500L7.800 4M4.300 6.200h3.600M4.300 7.900h3.600M6.100 5.600v3.300" fill="none" stroke="#ddd6fd" stroke-width="1" stroke-linecap="round"/></svg>
<div class="t " style="right:286.0px;top:484.9px;height:20px;line-height:20px;font-size:12px;color:#777">详情</div>
<svg class="ic" style="left:1394.7px;top:489.3px" width="6" height="9" viewBox="0 0 6 9"><path d="M1 .8L4.700 4.500 1 8.200" fill="none" stroke="#999" stroke-width="1"/></svg>
<div class="t " style="left:1211.7px;top:513.0px;height:30px;line-height:30px;font-size:27px;color:#2b2b2b">0</div>
<div class="t " style="left:1212.0px;top:541.0px;height:20px;line-height:20px;font-size:12px;color:#666">售后维权</div>
<svg class="ic" style="left:1394.05px;top:543.80px" width="12" height="12" viewBox="0 0 12 12"><circle cx="6" cy="6" r="5" fill="none" stroke="#eaa94e" stroke-width="1"/><rect x="5.500" y="3.200" width="1" height="3.600" fill="#eaa94e"/><rect x="5.500" y="7.700" width="1" height="1.100" fill="#eaa94e"/></svg>
<div class="card" style="left:1440.0px;top:468.5px;width:217.0px;height:104.70000000000005px"></div>
<div class="abs" style="left:1452.00px;top:480.80px;width:24.300px;height:24.300px;border-radius:8px;background:#e9e5fb"></div>
<svg class="ic" style="left:1458.00px;top:486.90px;overflow:visible" width="12.500" height="12.500" viewBox="0 0 12.500 12.500"><circle cx="7.100" cy="6" r="5.900" fill="url(#pg)"/><path d="M.7 2.100C-.2 4 -.2 6.200 .5 8.200M-1.600 7.200l2.100 1.400 .9-2.300" fill="none" stroke="#a698fa" stroke-width=".9" stroke-linecap="round"/><path d="M5.400 3.600l1.700 1.600 1.700-1.600M5.300 5.800h3.600M5.300 7.300h3.600M7.100 5.200v3.200" fill="none" stroke="#ddd6fd" stroke-width="1" stroke-linecap="round"/></svg>
<div class="t " style="right:47.299999999999955px;top:484.9px;height:20px;line-height:20px;font-size:12px;color:#777">详情</div>
<svg class="ic" style="left:1633.4px;top:489.3px" width="6" height="9" viewBox="0 0 6 9"><path d="M1 .8L4.700 4.500 1 8.200" fill="none" stroke="#999" stroke-width="1"/></svg>
<div class="t " style="left:1452.0px;top:513.0px;height:30px;line-height:30px;font-size:27px;color:#2b2b2b">0</div>
<div class="t " style="left:1452.3px;top:541.0px;height:20px;line-height:20px;font-size:12px;color:#666">退款订单</div>
<svg class="ic" style="left:1632.75px;top:543.80px" width="12" height="12" viewBox="0 0 12 12"><circle cx="6" cy="6" r="5" fill="none" stroke="#eaa94e" stroke-width="1"/><rect x="5.500" y="3.200" width="1" height="3.600" fill="#eaa94e"/><rect x="5.500" y="7.700" width="1" height="1.100" fill="#eaa94e"/></svg>
<div class="card" style="left:241.7px;top:594px;width:697.5999999999999px;height:325px"></div>
<div class="card" style="left:960.6px;top:594px;width:696.4px;height:325px"></div>
<div class="t " style="left:254px;top:605.0px;height:20px;line-height:20px;color:#333">销量榜</div>
<div class="t " style="left:972px;top:605.0px;height:20px;line-height:20px;color:#333">热搜榜</div>
<div class="th" style="left:254px;top:639px;width:673px"></div>
<div class="th" style="left:973px;top:639px;width:443px"></div>
<div class="t " style="left:270px;top:648.5px;height:20px;line-height:20px;color:#555">排名</div>
<div class="t " style="left:326px;top:648.5px;height:20px;line-height:20px;color:#555">名称</div>
<div class="t " style="left:839px;top:648.5px;height:20px;line-height:20px;color:#555">销量</div>
<div class="t " style="left:988px;top:648.5px;height:20px;line-height:20px;color:#555">排名</div>
<div class="t " style="left:1044px;top:648.5px;height:20px;line-height:20px;color:#555">名称</div>
<div class="t " style="left:1327.5px;top:648.5px;height:20px;line-height:20px;color:#555">搜索量(次)</div>
<div class="tr" style="left:254px;top:677.8px;width:673px;background:#fff"></div>
<svg class="ic" style="left:274.3px;top:687.8px" width="20" height="22" viewBox="0 0 20 22"><polygon points="10.00,0.80 18.83,5.90 18.83,16.10 10.00,21.20 1.17,16.10 1.17,5.90" fill="#fcc42f"/><polygon points="10.00,3.40 16.58,7.20 16.58,14.80 10.00,18.60 3.42,14.80 3.42,7.20" fill="#f49d12"/><polygon points="10.00,4.50 15.63,7.75 15.63,14.25 10.00,17.50 4.37,14.25 4.37,7.75" fill="#fdd352"/><path d="M6.600 8.600l1.800 1.700L10 7.600l1.600 2.700 1.800-1.700-.7 4.600H7.300z" fill="#fff3b8"/></svg>
<div class="thumb" style="left:326px;top:687.90px;background:#9aa3c0"></div>
<div class="t " style="left:356px;top:687.8px;height:20px;line-height:20px;color:#333">刀锋男鞋夏季透气防臭飞织运动鞋男潮流百搭休闲网面跑步鞋大码46</div>
<div class="t " style="left:839px;top:687.8px;height:20px;line-height:20px;color:#444;letter-spacing:.35px">62</div>
<div class="tr s" style="left:254px;top:717.0999999999999px;width:673px"></div>
<svg class="ic" style="left:274.3px;top:727.0999999999999px" width="20" height="22" viewBox="0 0 20 22"><polygon points="10.00,0.80 18.83,5.90 18.83,16.10 10.00,21.20 1.17,16.10 1.17,5.90" fill="#c6d0dc"/><polygon points="10.00,3.40 16.58,7.20 16.58,14.80 10.00,18.60 3.42,14.80 3.42,7.20" fill="#94a5b8"/><polygon points="10.00,4.50 15.63,7.75 15.63,14.25 10.00,17.50 4.37,14.25 4.37,7.75" fill="#dbe4ee"/><path d="M6.600 8.600l1.800 1.700L10 7.600l1.600 2.700 1.800-1.700-.7 4.600H7.300z" fill="#f6f9fc"/></svg>
<div class="thumb" style="left:326px;top:726.93px;background:#d6d6d1"></div>
<div class="t " style="left:356px;top:727.0999999999999px;height:20px;line-height:20px;color:#333">中国风龙图案棒球帽男潮牌休闲鸭舌帽女潮流百搭防晒遮阳太阳帽子</div>
<div class="t " style="left:839px;top:727.0999999999999px;height:20px;line-height:20px;color:#444;letter-spacing:.35px">42</div>
<div class="tr" style="left:254px;top:756.4px;width:673px;background:#fff"></div>
<svg class="ic" style="left:274.3px;top:766.4px" width="20" height="22" viewBox="0 0 20 22"><polygon points="10.00,0.80 18.83,5.90 18.83,16.10 10.00,21.20 1.17,16.10 1.17,5.90" fill="#f1c08f"/><polygon points="10.00,3.40 16.58,7.20 16.58,14.80 10.00,18.60 3.42,14.80 3.42,7.20" fill="#d8843b"/><polygon points="10.00,4.50 15.63,7.75 15.63,14.25 10.00,17.50 4.37,14.25 4.37,7.75" fill="#f2c596"/><path d="M6.600 8.600l1.800 1.700L10 7.600l1.600 2.700 1.800-1.700-.7 4.600H7.300z" fill="#fbe6cf"/></svg>
<div class="thumb" style="left:326px;top:765.96px;background:#e6d0cb"></div>
<div class="t " style="left:356px;top:766.4px;height:20px;line-height:20px;color:#333">森马国潮短裤男夏季潮印花大码中国风裤子休闲嘻哈潮流宽松五分裤</div>
<div class="t " style="left:839px;top:766.4px;height:20px;line-height:20px;color:#444;letter-spacing:.35px">31</div>
<div class="tr s" style="left:254px;top:795.6999999999999px;width:673px"></div>
<svg class="ic" style="left:274.3px;top:805.6999999999999px" width="20" height="22" viewBox="0 0 20 22"><polygon points="10.00,0.80 18.83,5.90 18.83,16.10 10.00,21.20 1.17,16.10 1.17,5.90" fill="#e2e2e2"/><polygon points="10.00,3.00 16.93,7.00 16.93,15.00 10.00,19.00 3.07,15.00 3.07,7.00" fill="#d0d0d0"/><text x="10" y="15.500" text-anchor="middle" font-family="Liberation Sans,sans-serif" font-weight="bold" font-size="12.500" fill="#fff">4</text></svg>
<div class="thumb" style="left:326px;top:804.99px;background:#9fb59f"></div>
<div class="t " style="left:356px;top:805.6999999999999px;height:20px;line-height:20px;color:#333">猫人男士睡衣男夏季100%纯棉薄款圆领套头短袖套装男ins潮休闲运动...</div>
<div class="t " style="left:839px;top:805.6999999999999px;height:20px;line-height:20px;color:#444;letter-spacing:.35px">13</div>
<div class="tr" style="left:254px;top:835.0px;width:673px;background:#fff"></div>
<svg class="ic" style="left:274.3px;top:845.0px" width="20" height="22" viewBox="0 0 20 22"><polygon points="10.00,0.80 18.83,5.90 18.83,16.10 10.00,21.20 1.17,16.10 1.17,5.90" fill="#e2e2e2"/><polygon points="10.00,3.00 16.93,7.00 16.93,15.00 10.00,19.00 3.07,15.00 3.07,7.00" fill="#d0d0d0"/><text x="10" y="15.500" text-anchor="middle" font-family="Liberation Sans,sans-serif" font-weight="bold" font-size="12.500" fill="#fff">5</text></svg>
<div class="thumb" style="left:326px;top:844.02px;background:#858a9e"></div>
<div class="t " style="left:356px;top:845.0px;height:20px;line-height:20px;color:#333">嘻哈休闲运动套装男士夏季潮牌ins胖子大码青少年男装短裤短袖t恤</div>
<div class="t " style="left:839px;top:845.0px;height:20px;line-height:20px;color:#444;letter-spacing:.35px">9</div>
<div class="tr" style="left:973px;top:678px;width:443px;background:#fff"></div>
<svg class="ic" style="left:993.3px;top:688.5px" width="20" height="22" viewBox="0 0 20 22"><polygon points="10.00,0.80 18.83,5.90 18.83,16.10 10.00,21.20 1.17,16.10 1.17,5.90" fill="#fcc42f"/><polygon points="10.00,3.40 16.58,7.20 16.58,14.80 10.00,18.60 3.42,14.80 3.42,7.20" fill="#f49d12"/><polygon points="10.00,4.50 15.63,7.75 15.63,14.25 10.00,17.50 4.37,14.25 4.37,7.75" fill="#fdd352"/><path d="M6.600 8.600l1.800 1.700L10 7.600l1.600 2.700 1.800-1.700-.7 4.600H7.300z" fill="#fff3b8"/></svg>
<div class="t " style="left:1044px;top:687.8px;height:20px;line-height:20px;color:#333">皮</div>
<div class="t " style="left:1327.5px;top:687.8px;height:20px;line-height:20px;color:#444">1</div>
<svg class="ic" style="left:1447px;top:644px" width="182" height="182" viewBox="-91 -91 182 182"><circle r="68.200" fill="none" stroke="#5470c6" stroke-width="36"/></svg>
</div></div>
<div class="abs" style="left:1473px;top:972px;width:200px;height:60px;-webkit-text-stroke:1.2px #b6b6b6;font-family:'Noto Sans CJK SC',sans-serif;font-weight:900;font-size:45px;line-height:60px;color:#b6b6b6;transform:skewX(-12deg);letter-spacing:0px;white-space:nowrap">懒人源码</div>
</body></html>
